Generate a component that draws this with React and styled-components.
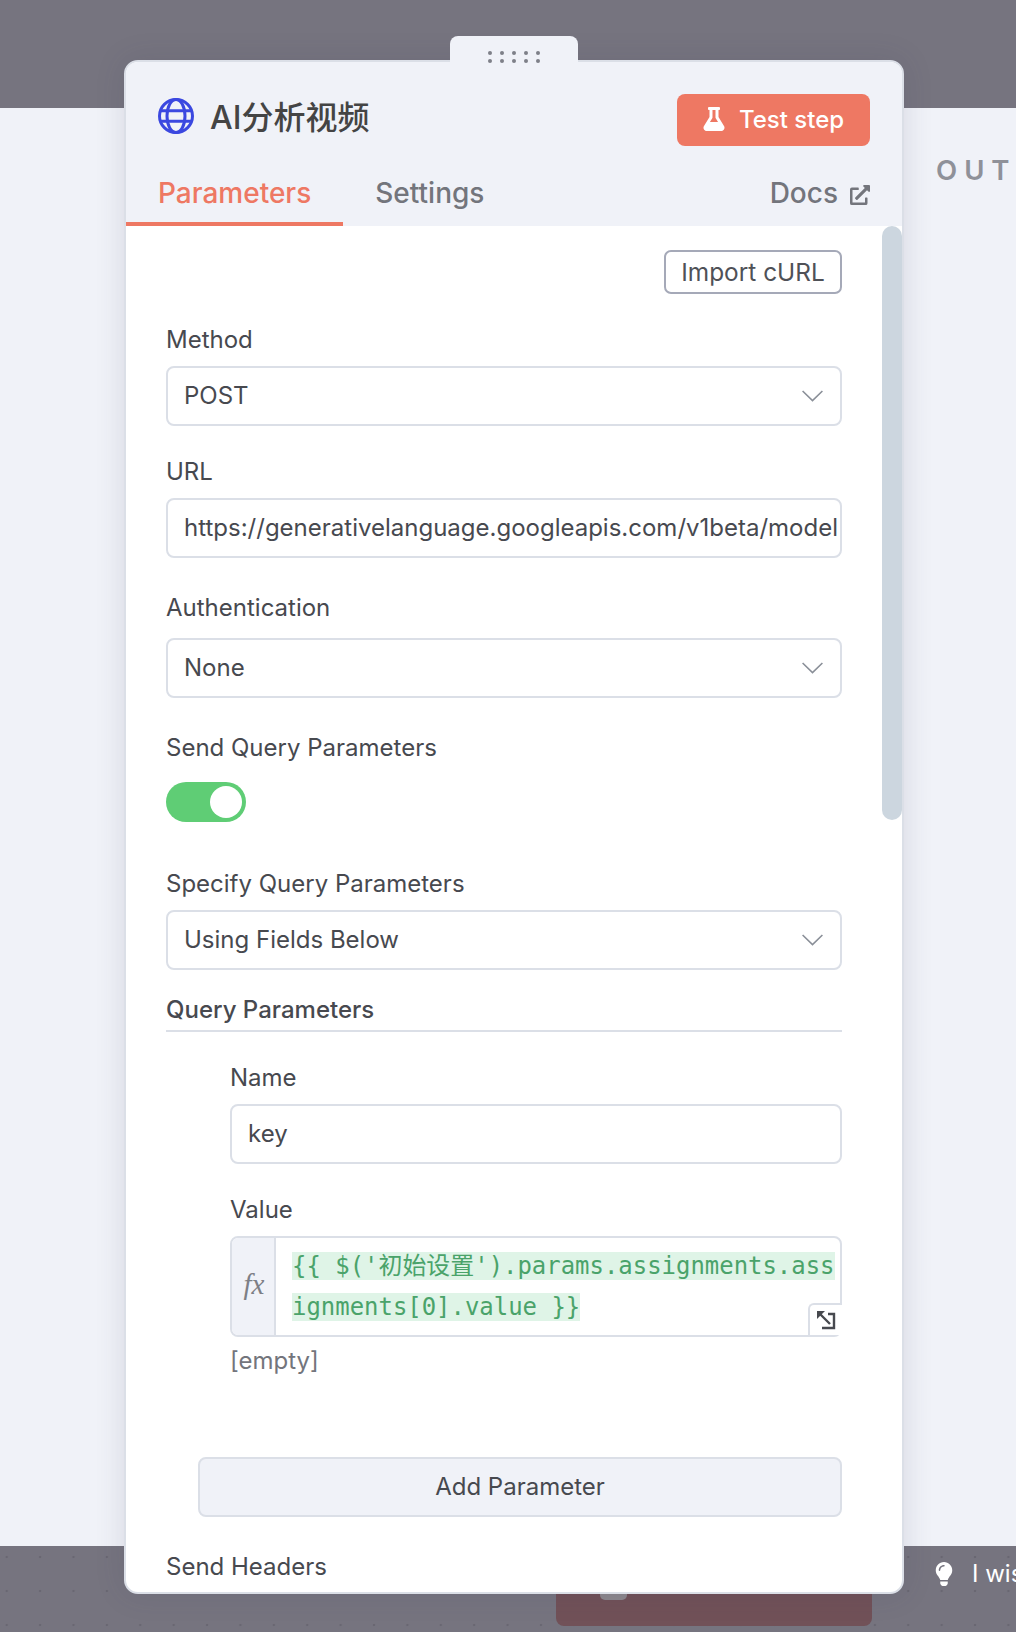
import React from 'react';
import styled, { createGlobalStyle } from 'styled-components';
import { FaFlask, FaExternalLinkAlt, FaLightbulb } from 'react-icons/fa';

const GlobalStyle = createGlobalStyle`
  html, body {
    margin: 0;
    padding: 0;
    background: #f0f2f8;
  }
  * {
    box-sizing: border-box;
  }
`;

const Page = styled.div`
  position: relative;
  width: 1016px;
  height: 1632px;
  overflow: hidden;
  display: grid;
  grid-template-rows: 108px 1438px 86px;
  font-family: Inter, "Noto Sans CJK SC", sans-serif;
`;

const TopBand = styled.div`
  background: #76747f;
`;

const MiddleBand = styled.div`
  background: #f0f2f8;
  padding: 45px 0 0 936px;
  overflow: hidden;
`;

const OutputTitle = styled.div`
  color: #8f9199;
  font-size: 27.5px;
  line-height: 34px;
  font-weight: 600;
  letter-spacing: 7px;
  white-space: nowrap;
`;

const BottomBand = styled.div`
  background-color: #76747f;
  background-image: radial-gradient(circle, #696772 1.2px, transparent 1.6px);
  background-size: 33.4px 34px;
  background-position: -10px -6px;
  display: flex;
  align-items: flex-start;
  overflow: hidden;
`;

const RedNode = styled.div`
  width: 316px;
  height: 80px;
  margin-left: 556px;
  padding-left: 44px;
  background: #715158;
  border-radius: 0 0 8px 8px;
  flex: none;
`;

const NodeKnob = styled.div`
  width: 27px;
  height: 54px;
  background: #8c878d;
  border-radius: 0 0 5px 5px;
`;

const Hint = styled.div`
  flex: none;
  margin: 12px 0 0 60px;
  display: flex;
  align-items: center;
  gap: 16px;
  color: #fff;
  font-size: 24px;
  line-height: 32px;
  white-space: nowrap;
`;

const Panel = styled.div`
  position: absolute;
  left: 124px;
  top: 60px;
  width: 780px;
  height: 1534px;
  background: #fff;
  border: 2px solid #dbdfe7;
  border-radius: 14px;
  box-shadow: 0 0 30px rgba(60, 60, 85, 0.14);
  display: flex;
  flex-direction: column;
`;

const DragHandle = styled.div`
  position: absolute;
  left: 324px;
  top: -26px;
  width: 128px;
  height: 28px;
  background: #f0f2f8;
  border-radius: 8px 8px 0 0;
  display: grid;
  grid-template-columns: repeat(5, 4px);
  grid-auto-rows: 4px;
  gap: 4px 8px;
  justify-content: center;
  padding-top: 15px;
`;

const Dot = styled.span`
  width: 4px;
  height: 4px;
  border-radius: 50%;
  background: #7e8088;
`;

const Header = styled.div`
  height: 164px;
  flex: none;
  background: #f0f2f8;
  border-radius: 12px 12px 0 0;
  display: flex;
  flex-direction: column;
`;

const TitleRow = styled.div`
  display: flex;
  align-items: flex-start;
  justify-content: space-between;
  padding: 32px 32px 0 32px;
`;

const TitleGroup = styled.div`
  display: flex;
  align-items: center;
  gap: 16px;
  padding-top: 2px;
`;

const Title = styled.div`
  color: #444;
  font-size: 32px;
  line-height: 36px;
  font-weight: 500;
  padding-top: 4px;
`;

const TestButton = styled.div`
  width: 193px;
  height: 52px;
  background: #ee7863;
  color: #fff;
  border-radius: 8px;
  display: flex;
  align-items: center;
  justify-content: center;
  gap: 13px;
  padding: 0 1px 2px 0;
  font-size: 24px;
  font-weight: 500;
`;

const Tabs = styled.div`
  display: flex;
  margin-top: 16px;
  flex: 1;
  padding-right: 32px;
`;

const Tab = styled.div`
  height: 64px;
  padding: 12px 32px 0;
  font-size: 28px;
  line-height: 38px;
  font-weight: 500;
  color: ${(p) => (p.$active ? '#ee7863' : '#73757c')};
  border-bottom: 4px solid ${(p) => (p.$active ? '#ee7863' : 'transparent')};
  ${(p) => p.$docs && 'margin-left: auto; padding: 12px 0 0; display: flex; gap: 12px;'}
`;

const DocsIcon = styled.span`
  display: flex;
  align-items: flex-start;
  padding-top: 11px;
`;

const Body = styled.div`
  position: relative;
  flex: 1;
  overflow: hidden;
  padding: 24px 60px 0 40px;
  border-radius: 0 0 12px 12px;
`;

const ScrollThumb = styled.div`
  position: absolute;
  top: 0;
  right: 0;
  width: 20px;
  height: 594px;
  background: #ccd6df;
  border-radius: 10px;
`;

const ImportRow = styled.div`
  display: flex;
  justify-content: flex-end;
`;

const ImportButton = styled.div`
  width: 178px;
  height: 44px;
  border: 2px solid #a5a9b8;
  border-radius: 7px;
  background: #fff;
  color: #4f5157;
  font-size: 24.4px;
  font-weight: 400;
  display: flex;
  align-items: center;
  justify-content: center;
`;

const Field = styled.div`
  margin-top: ${(p) => p.$top || 30}px;
  margin-left: ${(p) => p.$indent || 0}px;
`;

const Label = styled.div`
  color: #47494f;
  font-size: 24px;
  line-height: 30px;
  margin-bottom: ${(p) => p.$gap || 12}px;
`;

const Box = styled.div`
  height: 60px;
  border: 2px solid #dbdfe7;
  border-radius: 8px;
  background: #fff;
  color: #47494f;
  font-size: 24px;
  padding: 0 ${(p) => (p.$clip ? 2 : 17)}px 2px 16px;
  display: flex;
  align-items: center;
  justify-content: space-between;
  white-space: nowrap;
`;

const ClippedValue = styled.span`
  display: block;
  overflow: hidden;
  flex: 1;
  min-width: 0;
`;

const ChevronIcon = styled.svg`
  margin-top: 2px;
  flex: none;
`;

const Toggle = styled.div`
  width: 80px;
  height: 40px;
  border-radius: 20px;
  background: #5fcd75;
  padding: 4px;
  display: flex;
  justify-content: flex-end;
`;

const Knob = styled.div`
  width: 32px;
  height: 32px;
  border-radius: 50%;
  background: #fff;
`;

const SectionTitle = styled.div`
  margin-top: 25px;
  padding-bottom: 5px;
  border-bottom: 2px solid #dbdfe7;
  color: #47494f;
  font-size: 24px;
  line-height: 30px;
  font-weight: 500;
`;

const Expression = styled.div`
  position: relative;
  height: 101px;
  display: flex;
  border: 2px solid #dbdfe7;
  border-radius: 8px;
`;

const FxCell = styled.div`
  width: 44px;
  flex: none;
  background: #f0f2f8;
  border-right: 2px solid #dbdfe7;
  border-radius: 6px 0 0 6px;
  color: #7d7f86;
  font-family: "Liberation Serif", serif;
  font-style: italic;
  font-size: 29px;
  padding: 0 0 4px 2px;
  display: flex;
  align-items: center;
  justify-content: center;
`;

const Code = styled.div`
  flex: 1;
  padding: 8px 4px 0 16px;
  font-family: "DejaVu Sans Mono", "Noto Sans CJK SC", monospace;
  font-size: 23.95px;
  line-height: 41px;
  word-break: break-all;
  color: #4aa36a;
`;

const Resolvable = styled.span`
  background: #dff4e7;
`;

const ExpandButton = styled.div`
  position: absolute;
  right: -2px;
  bottom: 0;
  width: 34px;
  height: 32px;
  background: #fff;
  border-top: 2px solid #dbdfe7;
  border-left: 2px solid #dbdfe7;
  border-radius: 6px 0 0 0;
  display: flex;
  align-items: center;
  justify-content: center;
`;

const Hint2 = styled.div`
  margin-top: 7px;
  color: #73757c;
  font-size: 24px;
  line-height: 34px;
`;

const AddButton = styled.div`
  margin: 79px 0 0 32px;
  height: 60px;
  background: #f0f2f8;
  border: 2px solid #dbdfe7;
  border-radius: 8px;
  color: #47494f;
  font-size: 24px;
  padding-bottom: 2px;
  display: flex;
  align-items: center;
  justify-content: center;
`;

const Globe = () => (
  <svg width="36" height="36" viewBox="0 0 36 36" fill="none" stroke="#3b48e0" strokeWidth="3">
    <circle cx="18" cy="18" r="16.5" />
    <ellipse cx="18" cy="18" rx="9" ry="16.5" />
    <path d="M2.5 12.7h31M2.5 23.3h31" />
  </svg>
);

const Chevron = () => (
  <ChevronIcon width="21" height="12" viewBox="0 0 21 12" fill="none" stroke="#8a8f98" strokeWidth="1.6">
    <path d="M.6 1l9.9 9.6L20.4 1" />
  </ChevronIcon>
);

const ExpandIcon = () => (
  <svg width="20" height="20" viewBox="0 0 20 20" fill="none" stroke="#47494f" strokeWidth="2.4">
    <path d="M3 3l11 11M12 4h6v14H6" />
    <path d="M1 1h8L1 9z" fill="#47494f" strokeWidth="0" />
  </svg>
);

const App = () => (
  <>
    <GlobalStyle />
    <Page>
      <TopBand />
      <MiddleBand>
        <OutputTitle>OUTPUT</OutputTitle>
      </MiddleBand>
      <BottomBand>
        <RedNode>
          <NodeKnob />
        </RedNode>
        <Hint>
          <FaLightbulb size={24} />I wish this node would...
        </Hint>
      </BottomBand>

      <Panel>
        <DragHandle>
          {Array.from({ length: 10 }).map((_, i) => (
            <Dot key={i} />
          ))}
        </DragHandle>
        <Header>
          <TitleRow>
            <TitleGroup>
              <Globe />
              <Title>AI分析视频</Title>
            </TitleGroup>
            <TestButton>
              <FaFlask size={24} />
              Test step
            </TestButton>
          </TitleRow>
          <Tabs>
            <Tab $active>Parameters</Tab>
            <Tab>Settings</Tab>
            <Tab $docs>
              Docs
              <DocsIcon>
                <FaExternalLinkAlt size={20} />
              </DocsIcon>
            </Tab>
          </Tabs>
        </Header>
        <Body>
          <ScrollThumb />
          <ImportRow>
            <ImportButton>Import cURL</ImportButton>
          </ImportRow>
          <Field $top={31}>
            <Label $gap={11}>Method</Label>
            <Box>
              POST
              <Chevron />
            </Box>
          </Field>
          <Field $top={31}>
            <Label $gap={11}>URL</Label>
            <Box $clip>
              <ClippedValue>https://generativelanguage.googleapis.com/v1beta/models/gemini</ClippedValue>
            </Box>
          </Field>
          <Field $top={35}>
            <Label $gap={15}>Authentication</Label>
            <Box>
              None
              <Chevron />
            </Box>
          </Field>
          <Field $top={35}>
            <Label $gap={19}>Send Query Parameters</Label>
            <Toggle>
              <Knob />
            </Toggle>
          </Field>
          <Field $top={47}>
            <Label $gap={11}>Specify Query Parameters</Label>
            <Box>
              Using Fields Below
              <Chevron />
            </Box>
          </Field>
          <SectionTitle>Query Parameters</SectionTitle>
          <Field $top={31} $indent={64}>
            <Label $gap={11}>Name</Label>
            <Box>key</Box>
          </Field>
          <Field $top={31} $indent={64}>
            <Label $gap={11}>Value</Label>
            <Expression>
              <FxCell>fx</FxCell>
              <Code>
                <Resolvable>{"{{ $('初始设置').params.assignments.assignments[0].value }}"}</Resolvable>
              </Code>
              <ExpandButton>
                <ExpandIcon />
              </ExpandButton>
            </Expression>
            <Hint2>[empty]</Hint2>
          </Field>
          <AddButton>Add Parameter</AddButton>
          <Field $top={35}>
            <Label>Send Headers</Label>
          </Field>
        </Body>
      </Panel>
    </Page>
  </>
);

export default App;
